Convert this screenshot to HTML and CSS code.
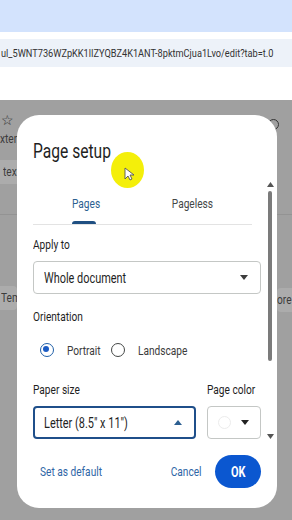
FILE: index.html
```html
<!DOCTYPE html>
<html lang="en">
<head>
    <meta charset="UTF-8">
    <meta name="viewport" content="width=device-width, initial-scale=1.0">
    <title>Page setup</title>
    <link rel="stylesheet" href="styles.css">
</head>
<body>
    <div class="tab-strip"></div>
    <div class="address-area">
        <div class="address-bar"><span class="url">ul_5WNT736WZpKK1lIZYQBZ4K1ANT-8pktmCjua1Lvo/edit?tab=t.0</span></div>
    </div>

    <div class="backdrop">
        <!-- dimmed document behind the dialog -->
        <span class="bg-star">&#9734;</span>
        <span class="bg-text bg-ext"><span class="sq">xten</span></span>
        <span class="bg-box bg-tex"><span class="sq">tex</span></span>
        <span class="bg-line"></span>
        <span class="bg-box bg-tem"><span class="sq">Tem</span></span>
        <span class="bg-box bg-ore"><span class="sq">ore</span></span>
        <span class="bg-icon"></span>

        <div class="dialog">
            <h1><span class="sq">Page setup</span></h1>

            <div class="dialog-body">
                <div class="content">
                    <div class="tabs">
                        <div class="tab active"><span class="sq mid">Pages</span></div>
                        <div class="tab"><span class="sq mid">Pageless</span></div>
                    </div>

                    <div class="label"><span class="sq">Apply to</span></div>
                    <div class="select">
                        <span class="sq">Whole document</span>
                        <svg class="caret" width="8" height="5" viewBox="0 0 8 5"><path d="M0 0h8L4 5z"/></svg>
                    </div>

                    <div class="label"><span class="sq">Orientation</span></div>
                    <div class="radios">
                        <span class="radio checked"></span>
                        <span class="radio-label sq">Portrait</span>
                        <span class="radio"></span>
                        <span class="radio-label sq">Landscape</span>
                    </div>

                    <div class="paper-row">
                        <div class="paper-col">
                            <div class="label"><span class="sq">Paper size</span></div>
                            <div class="select focused">
                                <span class="sq">Letter (8.5" x 11")</span>
                                <svg class="caret up" width="8" height="5" viewBox="0 0 8 5"><path d="M0 5h8L4 0z"/></svg>
                            </div>
                        </div>
                        <div class="color-col">
                            <div class="label"><span class="sq">Page color</span></div>
                            <div class="select color-select">
                                <span class="swatch"></span>
                                <svg class="caret dark" width="8" height="5" viewBox="0 0 8 5"><path d="M0 0h8L4 5z"/></svg>
                            </div>
                        </div>
                    </div>
                </div>

                <div class="scrollbar">
                    <svg width="7" height="5" viewBox="0 0 7 5"><path d="M0 5h7L3.5 0z"/></svg>
                    <div class="thumb"></div>
                    <svg class="scroll-down" width="7" height="5" viewBox="0 0 7 5"><path d="M0 0h7L3.5 5z"/></svg>
                </div>
            </div>

            <div class="actions">
                <button class="text-btn"><span class="sq">Set as default</span></button>
                <div class="right-actions">
                    <button class="text-btn"><span class="sq end">Cancel</span></button>
                    <button class="ok-btn"><span class="sq mid">OK</span></button>
                </div>
            </div>

            <!-- click highlight from the screen recording -->
            <div class="click-spot">
                <svg width="10" height="14" viewBox="0 0 10 14"><path d="M1 1v11l3-3 2 4 2-1-2-4h4z" fill="#fff" stroke="#555" stroke-width="0.9"/></svg>
            </div>
        </div>
    </div>
</body>
</html>
```

FILE: styles.css
```css
body {
    margin: 0;
    width: 292px;
    height: 520px;
    overflow: hidden;
    font-family: 'Roboto', 'Liberation Sans', sans-serif;
    background-color: #a2a2a2;
    color: #1f1f1f;
}

/* the recording is squeezed sideways, so text is drawn narrower */
.sq {
    display: inline-block;
    white-space: nowrap;
    transform: scaleX(0.78);
    transform-origin: left center;
}

.sq.mid {
    transform-origin: center center;
}

.sq.end {
    transform-origin: right center;
}

.tab-strip {
    height: 32px;
    background-color: #d3e3fd;
}

.address-area {
    height: 68px;
    background-color: #ffffff;
    padding-top: 7px;
    box-sizing: border-box;
}

.address-bar {
    height: 28px;
    line-height: 28px;
    background-color: #edf2f9;
    font-size: 11.5px;
    color: #333;
    white-space: nowrap;
    overflow: hidden;
    padding-left: 1px;
}

.url {
    display: inline-block;
    transform: scaleX(0.8);
    transform-origin: left center;
}

.backdrop {
    position: relative;
    height: 420px;
    background-color: #a0a0a0;
    padding: 15px 0 0 17px;
    box-sizing: border-box;
}

/* faint page behind the overlay */
.bg-star {
    position: absolute;
    left: 1px;
    top: 12px;
    font-size: 14px;
    color: #2a2a2a;
}

.bg-text,
.bg-box {
    position: absolute;
    font-size: 13px;
    color: #3c3c3c;
}

.bg-ext {
    left: 0;
    top: 31px;
}

.bg-box {
    background-color: #acacac;
    height: 24px;
    line-height: 24px;
}

.bg-tex {
    left: 0;
    top: 60px;
    width: 17px;
    padding-left: 3px;
    box-sizing: border-box;
}

.bg-line {
    position: absolute;
    left: 0;
    right: 0;
    top: 114px;
    height: 1px;
    background-color: #939393;
}

.bg-tem {
    left: 0;
    top: 186px;
    width: 17px;
    padding-left: 1px;
    box-sizing: border-box;
    border-radius: 0 4px 4px 0;
}

.bg-ore {
    right: 0;
    top: 188px;
    width: 15px;
    border-radius: 4px 0 0 4px;
}

.bg-icon {
    position: absolute;
    right: 13px;
    top: 19px;
    width: 9px;
    height: 9px;
    border: 1.5px solid #333;
    border-radius: 50%;
}

.dialog {
    position: relative;
    width: 260px;
    height: 393px;
    background-color: #ffffff;
    border-radius: 22px;
    padding: 24px 0 0 16px;
    box-sizing: border-box;
    display: flex;
    flex-direction: column;
}

h1 {
    margin: 0;
    font-size: 20px;
    font-weight: 400;
    line-height: 24px;
    color: #1f1f1f;
}

.dialog-body {
    display: flex;
    margin-top: 22px;
}

.content {
    width: 228px;
}

.tabs {
    display: flex;
    margin-right: 9px;
    padding-right: 7px;
    border-bottom: 1px solid #e3e3e3;
}

.tab {
    flex: 1;
    text-align: center;
    font-size: 13px;
    color: #444746;
    height: 39px;
    line-height: 38px;
    position: relative;
}

.tab.active {
    color: #2c5f91;
}

.tab.active::after {
    content: "";
    position: absolute;
    left: 39px;
    width: 24px;
    bottom: 0;
    height: 3px;
    border-radius: 3px 3px 0 0;
    background-color: #1f4f82;
}

.label {
    font-size: 13px;
    line-height: 16px;
    color: #1f1f1f;
    white-space: nowrap;
}

.tabs + .label {
    margin-top: 12px;
}

.select {
    margin-top: 8px;
    height: 33px;
    border: 1px solid #c4c7c5;
    border-radius: 4px;
    box-sizing: border-box;
    display: flex;
    align-items: center;
    justify-content: space-between;
    padding: 0 12px 0 10px;
    font-size: 14px;
    color: #1f1f1f;
}

.caret {
    fill: #3c3c3c;
    flex-shrink: 0;
}

.caret.up {
    fill: #2c5f91;
}

.select + .label {
    margin-top: 15px;
}

.radios {
    display: flex;
    align-items: center;
    height: 20px;
    margin-top: 15px;
    padding-left: 7px;
    font-size: 13px;
    color: #3c3c3c;
}

.radio {
    width: 14px;
    height: 14px;
    border: 1.6px solid #444746;
    border-radius: 50%;
    box-sizing: border-box;
    position: relative;
    flex-shrink: 0;
}

.radio.checked {
    border-color: #1f5fa8;
}

.radio.checked::after {
    content: "";
    position: absolute;
    left: 2.4px;
    top: 2.4px;
    width: 6px;
    height: 6px;
    border-radius: 50%;
    background-color: #1a5bc4;
}

.radio-label {
    margin-left: 13px;
    margin-right: 1px;
}

.paper-row {
    display: flex;
    margin-top: 22px;
}

.paper-col {
    width: 163px;
}

.color-col {
    margin-left: 11px;
    width: 54px;
}

.select.focused {
    border: 2px solid #1f4f8a;
    padding: 0 12px 0 9px;
}

.color-select {
    padding: 0 11px 0 10px;
}

.swatch {
    width: 13px;
    height: 13px;
    border: 1px solid #ececec;
    border-radius: 50%;
    box-sizing: border-box;
}

.caret.dark {
    fill: #222;
}

.scrollbar {
    width: 16px;
    margin-left: 2px;
    margin-top: -3px;
    display: flex;
    flex-direction: column;
    align-items: center;
}

.scrollbar svg {
    fill: #555;
}

.thumb {
    margin-top: 4px;
    width: 4px;
    height: 170px;
    border-radius: 2px;
    background-color: #7b7b7b;
}

.scroll-down {
    margin-top: 73px;
}

.actions {
    margin-top: 16px;
    display: flex;
    align-items: center;
    justify-content: space-between;
    padding: 0 16px 0 7px;
}

.right-actions {
    display: flex;
    align-items: center;
}

button {
    font-family: 'Roboto', 'Liberation Sans', sans-serif;
    font-size: 13px;
    border: none;
    background: none;
    cursor: pointer;
    padding: 0;
}

.text-btn {
    color: #2f66a6;
}

.ok-btn {
    margin-left: 13px;
    width: 46px;
    height: 33px;
    border-radius: 17px;
    background-color: #0b57d0;
    color: #ffffff;
    font-weight: 700;
    font-size: 14px;
}

.click-spot {
    position: absolute;
    left: 94px;
    top: 37px;
    width: 33px;
    height: 36px;
    border-radius: 50%;
    background-color: #f4ef0a;
    display: flex;
    justify-content: center;
    align-items: center;
}

.click-spot svg {
    margin: 8px 0 0 2px;
}
```
